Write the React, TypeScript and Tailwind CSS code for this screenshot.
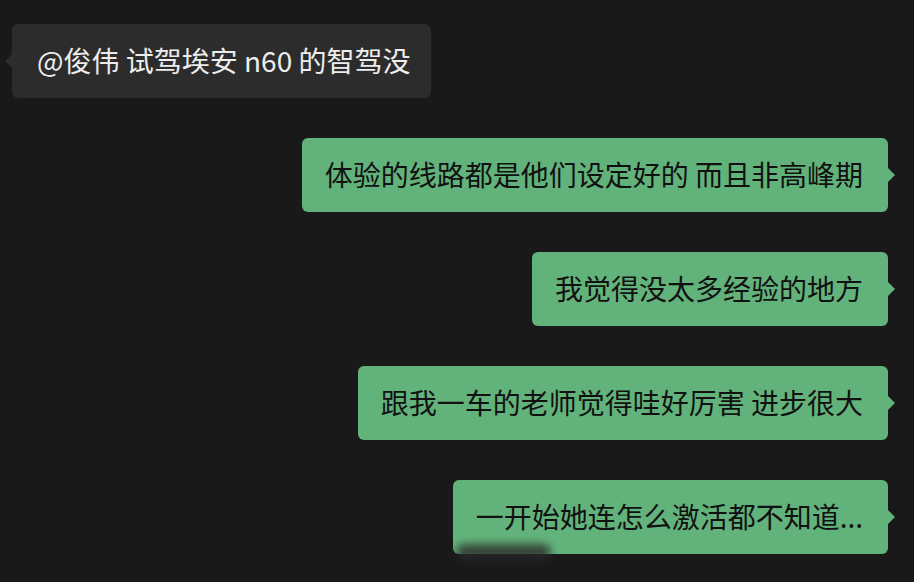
import React from 'react';

const MINE: string[] = [
  '体验的线路都是他们设定好的 而且非高峰期',
  '我觉得没太多经验的地方',
  '跟我一车的老师觉得哇好厉害 进步很大',
  '一开始她连怎么激活都不知道...',
];

const font = { fontFamily: '"Noto Sans CJK SC", "Noto Sans", sans-serif' };

function LeftBubble({ text }: { text: string }) {
  return (
    <div className="relative ml-[12px] self-start">
      <div className="absolute left-[-7px] top-[29px] h-0 w-0 border-y-[8px] border-r-[8px] border-y-transparent border-r-[#2c2c2c]" />
      <div className="flex h-[74px] items-center rounded-[6px] bg-[#2c2c2c] pl-[25px] pr-[21px] pb-[2px] text-[28px] text-[#ededed]">
        {text}
      </div>
    </div>
  );
}

function RightBubble({ text }: { text: string }) {
  return (
    <div className="relative mr-[26px] self-end">
      <div className="absolute right-[-7px] top-[29px] h-0 w-0 border-y-[8px] border-l-[8px] border-y-transparent border-l-[#62b37b]" />
      <div className="flex h-[74px] items-center rounded-[6px] bg-[#62b37b] pl-[23px] pr-[25px] pb-[2px] text-[28px] text-[#111]">
        {text}
      </div>
    </div>
  );
}

export default function App() {
  return (
    <div className="relative h-[582px] w-[914px] overflow-hidden bg-[#191919]" style={font}>
      <div className="flex flex-col gap-[40px] pt-[24px]">
        <LeftBubble text="@俊伟 试驾埃安 n60 的智驾没" />
        {MINE.map((t) => (
          <RightBubble key={t} text={t} />
        ))}
      </div>
      {/* smudge under the last bubble */}
      <div className="absolute left-[456px] top-[544px] h-[16px] w-[95px] rounded-full bg-[#2a2a2a] opacity-80 blur-[4px]" />
    </div>
  );
}
